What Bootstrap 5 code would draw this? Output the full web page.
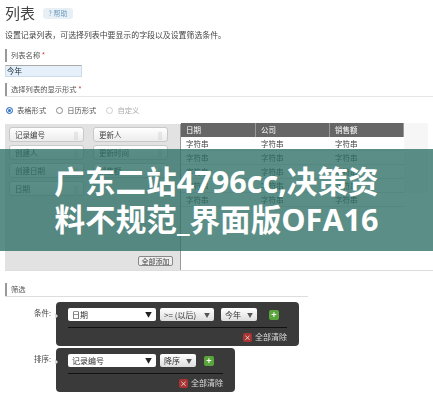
<!DOCTYPE html>
<html lang="zh">
<head>
<meta charset="utf-8">
<title>列表</title>
<link rel="stylesheet" href="https://cdn.jsdelivr.net/npm/bootstrap@5.3.0/dist/css/bootstrap.min.css">
<style>
html,body{height:400px;overflow:hidden;background:#fff}
body{font-family:"Noto Sans CJK SC",sans-serif;font-size:8px;color:#333;line-height:1.2;position:relative}
.shot{height:400px;padding:3px 0 0 5px;filter:blur(.4px);overflow:hidden}
.heading-row{height:16px;margin-top:2px}
.page-title{font-size:15px;margin:0;color:#444;line-height:16px;font-weight:400}
.help-pill{background:#e8f0f6;color:#6d9cc0;width:30px;height:11px;border-radius:3px;margin-left:8px;font-size:7px;line-height:11px}
.intro{margin:7px 0 0;height:14px;line-height:14px;white-space:nowrap;color:#444;font-size:7.9px}
.field-label{border-left:2px solid #999;padding-left:4px;height:13px;line-height:13px;color:#555;font-size:7.3px}
.field-label b{color:#c33;font-weight:400}
.name-label{margin-top:7px}
.name-input{width:77px;height:12px;margin-top:3px;background:#e6f0fa;border:1px solid #cddbe8;border-top-color:#aaa;padding:0 1px;font-size:7.5px;line-height:10px;color:#234}
.rule-label{margin-top:6px}
.rule{height:1px;background:#e6e6e6}
.radios{height:26px;gap:10px;font-size:7.3px;color:#555;padding-left:1px}
.radio-dot{width:7px;height:7px;border-radius:50%;border:1px solid #888;display:inline-block;margin-right:4px;background:#fff;vertical-align:-1px}
.radio-dot.on{background:#2f6fc4;box-shadow:inset 0 0 0 1px #fff;border-color:#3a78c8}
.radio-off{color:#aaa}
.radio-off .radio-dot{border-color:#ccc}
.builder{height:148px;border-bottom:1px solid #ddd}
.pool{width:176px;background:#e2e2e2;border-right:1px solid #999;padding:3px 4px;position:relative;margin-top:1px}
.pool-grid{display:grid;grid-template-columns:75px 75px;column-gap:9px;row-gap:3px}
.chip{height:15px;background:linear-gradient(#fff,#ececec);border:1px solid #c8c8c8;border-radius:3px;padding:0 5px;line-height:13px;font-size:7.5px;color:#444;display:flex;justify-content:space-between}
.chip i{font-style:normal;color:#bbb}
.add-all{position:absolute;right:7px;bottom:4px;height:10px;width:35px;border:1px solid #888;border-radius:2px;background:#eee;font-size:7px;line-height:8px;text-align:center;color:#444}
.table-zone{width:223px;background:#fff;font-size:7.5px;align-self:flex-start}
.tzone-row{display:grid;grid-template-columns:75px 74px 74px;height:14px;line-height:14px;border-bottom:1px solid #ddd;color:#444}
.tzone-row span{padding-left:5px}
.tzone-head{background:#666;color:#fff;border-bottom:0}
.tzone-head span{border-right:1px solid #999}
.side-fill{width:24px;height:70px;background:#f6f6f6}
.filter-label{margin-top:12px}
.filter-rule{height:1px;background:#ddd;width:303px}
.cond-row{display:flex;margin-top:2px}
.cond-first{margin-top:5px}
.cond-name{width:51px;text-align:right;padding:6px 5px 0 0;font-size:7.5px;color:#444;flex:none}
.dark-box{background:#3a3a3a;border-radius:4px;padding:6px 12px 0;height:44px;color:#eee;position:relative}
.dark-wide{width:243px}
.dark-narrow{width:179px}
.dark-box::before{content:"";position:absolute;left:-1px;top:11px;border-left:3px solid #ddd;border-top:3px solid transparent;border-bottom:3px solid transparent}
.dark-top{gap:4px;height:13px;align-items:center}
.pick{height:13px;background:linear-gradient(#fff,#ddd);border-radius:2px;color:#333;font-size:8px;line-height:13px;padding:0 4px;display:flex;justify-content:space-between;align-items:center;flex:none}
.pick-main{width:88px;background:#fff}
.pick em{font-style:normal;font-size:6px;color:#555}
.pick-main em{color:#222;font-size:7px}
.w-ge{width:54px;margin-right:3px}.w-year{width:36px}.w-desc{width:36px}
.plus{width:10px;height:10px;border-radius:2px;background:#5aa43c;color:#fff;font-weight:700;font-size:9px;line-height:9px;text-align:center;margin-left:8px;flex:none}
.narrow-plus{margin-left:4px}
.dark-rule{height:1px;background:#111;margin-top:6px}
.clear-row{font-size:8px;margin-top:3px;gap:3px;color:#ddd;height:12px;align-items:center}
.clear-x{width:9px;height:9px;background:#a83434;border-radius:2px;color:#fff;font-size:7px;line-height:9px;text-align:center}
.banner{position:absolute;left:0;right:0;top:149px;height:102px;background:rgba(45,110,100,.78);color:#fff;font-family:"Open Sans","Noto Sans CJK SC",sans-serif;font-weight:700;font-size:30.6px;line-height:38px;padding-top:13px;text-align:center;white-space:nowrap}
</style>
</head>
<body>
<div class="shot">
  <div class="d-flex align-items-center heading-row">
    <h1 class="page-title">列表</h1>
    <div class="help-pill text-center">? 帮助</div>
  </div>
  <p class="intro">设置记录列表，可选择列表中要显示的字段以及设置筛选条件。</p>
  <div class="field-label name-label">列表名称 <b>*</b></div>
  <div class="name-input">今年</div>
  <div class="field-label rule-label">选择列表的显示形式 <b>*</b></div>
  <div class="rule"></div>
  <div class="d-flex align-items-center radios">
    <span><span class="radio-dot on"></span>表格形式</span>
    <span><span class="radio-dot"></span>日历形式</span>
    <span class="radio-off"><span class="radio-dot"></span>自定义</span>
  </div>
  <div class="d-flex builder">
    <div class="pool">
      <div class="pool-grid">
        <div class="chip">记录编号<i>||</i></div>
        <div class="chip">更新人<i>||</i></div>
        <div class="chip">创建人<i>||</i></div>
        <div class="chip">更新时间<i>||</i></div>
        <div class="chip">创建日期<i>||</i></div>
        <div class="chip">销售额<i>||</i></div>
        <div class="chip">日期<i>||</i></div>
      </div>
      <div class="add-all">全部添加</div>
    </div>
    <div class="table-zone">
      <div class="tzone-row tzone-head"><span>日期</span><span>公司</span><span>销售额</span></div>
      <div class="tzone-row"><span>字符串</span><span>字符串</span><span>字符串</span></div>
      <div class="tzone-row"><span>字符串</span><span>字符串</span><span>字符串</span></div>
      <div class="tzone-row"><span>字符串</span><span>字符串</span><span>字符串</span></div>
      <div class="tzone-row"><span>字符串</span><span>字符串</span><span>字符串</span></div>
      <div class="tzone-row"><span>字符串</span><span>字符串</span><span>字符串</span></div>
    </div>
    <div class="side-fill"></div>
  </div>
  <div class="field-label filter-label">筛选</div>
  <div class="filter-rule"></div>
  <div class="cond-row cond-first">
    <div class="cond-name">条件:</div>
    <div class="dark-box dark-wide">
      <div class="d-flex dark-top">
        <div class="pick pick-main">日期<em>▼</em></div>
        <div class="pick w-ge">&gt;= (以后)<em>▼</em></div>
        <div class="pick w-year">今年<em>▼</em></div>
        <div class="plus">+</div>
      </div>
      <div class="dark-rule"></div>
      <div class="d-flex justify-content-end clear-row"><span class="clear-x">×</span>全部清除</div>
    </div>
  </div>
  <div class="cond-row">
    <div class="cond-name">排序:</div>
    <div class="dark-box dark-narrow">
      <div class="d-flex dark-top">
        <div class="pick pick-main">记录编号<em>▼</em></div>
        <div class="pick w-desc">降序<em>▼</em></div>
        <div class="plus narrow-plus">+</div>
      </div>
      <div class="dark-rule"></div>
      <div class="d-flex justify-content-end clear-row"><span class="clear-x">×</span>全部清除</div>
    </div>
  </div>
</div>
<div class="banner">广东二站4796cc,决策资<br>料不规范_界面版OFA16</div>
<script src="https://cdn.jsdelivr.net/npm/bootstrap@5.3.0/dist/js/bootstrap.bundle.min.js"></script>
</body>
</html>
